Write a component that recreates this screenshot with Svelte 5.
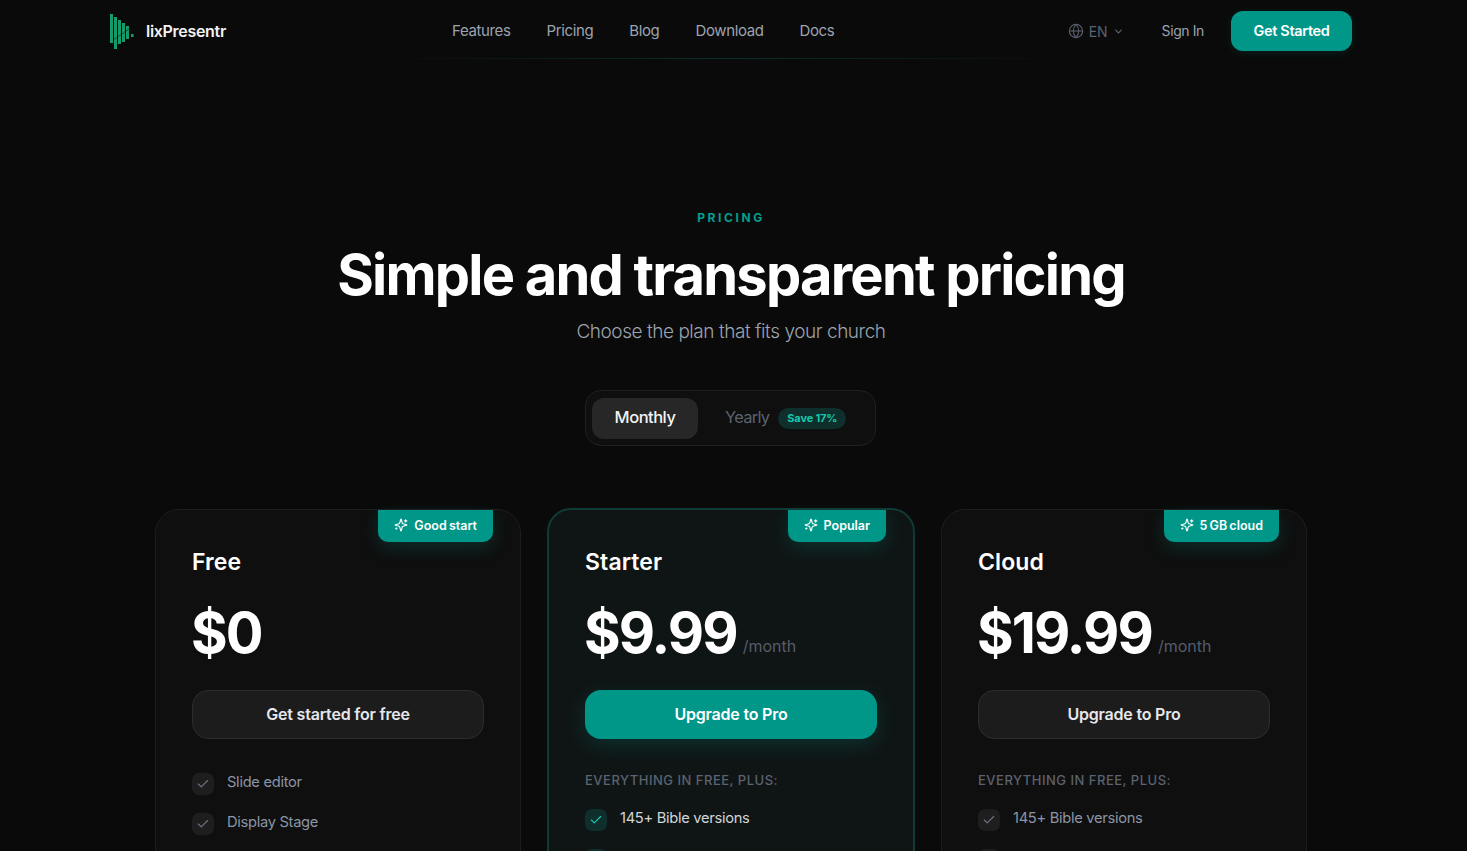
<script>
	const plans = [
		{
			name: "Free",
			badge: "Good start",
			price: "$0",
			cta: "Get started for free",
			features: ["Slide editor", "Display Stage"],
		},
		{
			name: "Starter",
			badge: "Popular",
			price: "$9.99",
			period: "/month",
			cta: "Upgrade to Pro",
			label: "Everything in Free, plus:",
			// second row is cut off by the bottom of the window, only its check shows
			features: ["145+ Bible versions", ""],
			featured: true,
		},
		{
			name: "Cloud",
			badge: "5 GB cloud",
			price: "$19.99",
			period: "/month",
			cta: "Upgrade to Pro",
			label: "Everything in Free, plus:",
			features: ["145+ Bible versions", ""],
		},
	];
	const links = ["Features", "Pricing", "Blog", "Download", "Docs"];
</script>

<div class="page">
	<header>
		<div class="bar">
			<a class="logo" href="#top">
				<svg width="24" height="36" viewBox="0 0 24 36" fill="#159a6c">
					<rect x="0" y="1" width="3" height="29" />
					<rect x="4" y="4" width="3" height="32" />
					<rect x="8" y="7" width="3" height="24" />
					<rect x="12" y="10" width="3" height="19" />
					<rect x="16" y="13" width="3" height="13" />
					<rect x="21" y="21" width="2.6" height="3" />
					<path d="M4 26.5 19 16" stroke="#0a0a0a" stroke-width="0.7" opacity="0.7" />
				</svg>
				<span>lixPresentr</span>
			</a>
			<nav>
				{#each links as link}
					<a href="#top">{link}</a>
				{/each}
			</nav>
			<div class="actions">
				<div class="lang">
					<svg width="16" height="16" viewBox="0 0 24 24" fill="none" stroke="currentColor" stroke-width="1.6">
						<circle cx="12" cy="12" r="10" />
						<path d="M12 2a14.5 14.5 0 0 0 0 20 14.5 14.5 0 0 0 0-20" />
						<path d="M2 12h20" />
					</svg>
					<span>EN</span>
					<svg width="11" height="11" viewBox="0 0 24 24" fill="none" stroke="currentColor" stroke-width="2.4">
						<path d="m5 8 7 7 7-7" />
					</svg>
				</div>
				<a class="signin" href="#top">Sign In</a>
				<button class="start">Get Started</button>
			</div>
		</div>
	</header>

	<main>
		<p class="eyebrow">PRICING</p>
		<h1>Simple and transparent pricing</h1>
		<p class="sub">Choose the plan that fits your church</p>

		<div class="toggle">
			<button class="opt active">Monthly</button>
			<div class="opt yearly">
				<span class="year">Yearly</span>
				<span class="save">Save 17%</span>
			</div>
		</div>

		<section class="cards">
			{#each plans as plan}
				<article class="card" class:featured={plan.featured}>
					<div class="badge">
						<svg width="14" height="14" viewBox="0 0 24 24" fill="none" stroke="currentColor" stroke-width="2" stroke-linecap="round" stroke-linejoin="round">
							<path d="M9.937 15.5A2 2 0 0 0 8.5 14.063l-6.135-1.582a.5.5 0 0 1 0-.962L8.5 9.936A2 2 0 0 0 9.937 8.5l1.582-6.135a.5.5 0 0 1 .963 0L14.063 8.5A2 2 0 0 0 15.5 9.937l6.135 1.581a.5.5 0 0 1 0 .964L15.5 14.063a2 2 0 0 0-1.437 1.437l-1.582 6.135a.5.5 0 0 1-.963 0z" />
							<path d="M20 3v4" />
							<path d="M22 5h-4" />
							<path d="M4 17v2" />
							<path d="M5 18H3" />
						</svg>
						<span>{plan.badge}</span>
					</div>
					<h2>{plan.name}</h2>
					<div class="price">
						<strong>{plan.price}</strong>
						{#if plan.period}<span>{plan.period}</span>{/if}
					</div>
					<button class="cta">{plan.cta}</button>
					{#if plan.label}
						<p class="label">{plan.label}</p>
					{/if}
					<ul class:tight={plan.label}>
						{#each plan.features as feature}
							<li>
								<span class="check">
									<svg width="14" height="14" viewBox="0 0 24 24" fill="none" stroke="currentColor" stroke-width="2" stroke-linecap="round" stroke-linejoin="round">
										<path d="M20 6 9 17l-5-5" />
									</svg>
								</span>
								{feature}
							</li>
						{/each}
					</ul>
				</article>
			{/each}
		</section>
	</main>
</div>

<style>
	:global(body) {
		background: #0a0a0a;
		overflow: hidden;
	}

	.page {
		width: 1462px;
		height: 851px;
		overflow: hidden;
		font-family: Inter, "Liberation Sans", sans-serif;
		color: #fff;
	}

	a {
		text-decoration: none;
		color: inherit;
	}

	button {
		font-family: inherit;
		border: 0;
		cursor: pointer;
	}

	header {
		height: 58px;
		position: relative;
	}

	header::after {
		content: "";
		position: absolute;
		left: 380px;
		width: 690px;
		bottom: -1px;
		height: 1px;
		background: linear-gradient(90deg, transparent, rgba(0, 150, 136, 0.28), transparent);
	}

	.bar {
		display: flex;
		align-items: center;
		height: 62px;
		padding: 0 110px;
	}

	.logo {
		display: flex;
		align-items: center;
		gap: 12px;
		font-size: 16px;
		font-weight: 600;
		letter-spacing: -0.3px;
		color: #f2f2f2;
	}

	nav {
		display: flex;
		gap: 36px;
		margin-left: 226px;
		padding-bottom: 2px;
		font-size: 15px;
		letter-spacing: -0.37px;
		color: #9ca3af;
	}

	.actions {
		display: flex;
		align-items: center;
		margin-left: auto;
	}

	.lang {
		display: flex;
		align-items: center;
		gap: 5px;
		font-size: 14px;
		color: #5b6270;
	}

	.signin {
		margin-left: 38px;
		padding-bottom: 2px;
		font-size: 14px;
		letter-spacing: -0.4px;
		color: #9ca3af;
	}

	.start {
		margin-left: 27px;
		width: 121px;
		height: 40px;
		padding: 0 0 2px;
		border-radius: 12px;
		background: #009688;
		color: #fff;
		font-size: 14.5px;
		font-weight: 600;
		letter-spacing: -0.35px;
		box-shadow: 0 2px 10px rgba(0, 150, 136, 0.15);
	}

	main {
		display: flex;
		flex-direction: column;
		align-items: center;
		padding-top: 152px;
	}

	.eyebrow {
		margin: 0;
		font-size: 12px;
		line-height: 15px;
		font-weight: 700;
		letter-spacing: 2.6px;
		color: #009f8f;
	}

	h1 {
		margin: 18px 0 0;
		font-size: 56px;
		line-height: 64px;
		font-weight: 700;
		letter-spacing: -1.78px;
		color: #fff;
	}

	.sub {
		margin: 11px 0 0;
		font-size: 19px;
		line-height: 28px;
		font-weight: 300;
		letter-spacing: -0.45px;
		color: #9ca3af;
	}

	.toggle {
		display: flex;
		align-items: center;
		box-sizing: border-box;
		width: 291px;
		height: 56px;
		margin: 44px 1px 0 0;
		padding: 0 6px;
		border: 1px solid #202020;
		border-radius: 16px;
		background: #0f0f0f;
	}

	.opt {
		font-size: 16.5px;
		letter-spacing: -0.5px;
	}

	.active {
		width: 106px;
		height: 41px;
		padding: 0 0 2px;
		border-radius: 12px;
		background: #272727;
		color: #f4f4f4;
		font-weight: 500;
	}

	.yearly {
		display: flex;
		align-items: center;
		gap: 9px;
		margin-left: 27px;
		letter-spacing: -0.75px;
		color: #5b6270;
	}

	.year {
		padding-bottom: 2px;
	}

	.save {
		padding: 0 9px;
		line-height: 21px;
		border-radius: 11px;
		background: #0f2f2c;
		color: #14c8ac;
		font-size: 11px;
		font-weight: 700;
		letter-spacing: -0.15px;
	}

	.cards {
		display: grid;
		grid-template-columns: 366px 368px 366px;
		gap: 26px;
		align-items: start;
		margin-top: 63px;
	}

	.card {
		position: relative;
		height: 420px;
		padding: 0 36px;
		border: 1px solid #1d1d1d;
		border-radius: 24px;
		background: #0f0f0f;
	}

	.featured {
		margin-top: -1px;
		border: 2px solid #103a35;
		background: #0f1515;
	}

	.badge {
		position: absolute;
		top: 0;
		right: 27px;
		display: flex;
		align-items: center;
		gap: 6px;
		box-sizing: border-box;
		height: 32px;
		padding: 0 16px 2px;
		border-radius: 0 0 10px 10px;
		background: #009688;
		font-size: 12.5px;
		font-weight: 600;
		word-spacing: -1px;
		box-shadow: 0 6px 18px rgba(0, 150, 136, 0.22);
	}

	h2 {
		margin: 37px 0 0;
		font-size: 23px;
		line-height: 30px;
		font-weight: 600;
		letter-spacing: 0.1px;
	}

	.price {
		display: flex;
		align-items: flex-end;
		gap: 6px;
		margin: 22px 0 0 -1px;
	}

	.price strong {
		font-size: 56px;
		line-height: 68px;
		font-weight: 700;
		letter-spacing: -1.9px;
	}

	.price span {
		margin-bottom: 11.5px;
		font-size: 16px;
		line-height: 20px;
		color: #555c6b;
	}

	.cta {
		display: block;
		box-sizing: border-box;
		width: 292px;
		height: 49px;
		margin-top: 23px;
		padding: 0 0 2px;
		border: 1px solid #2c2c2c;
		border-radius: 16px;
		background: #1c1c1c;
		color: #e5e7eb;
		font-size: 16px;
		font-weight: 600;
		letter-spacing: -0.2px;
	}

	.featured .cta {
		border: 0;
		background: #009688;
		color: #fff;
		box-shadow: 0 6px 20px rgba(0, 150, 136, 0.22);
	}

	.label {
		margin: 32px 0 0;
		font-size: 13px;
		line-height: 18px;
		font-weight: 500;
		letter-spacing: 0.5px;
		text-transform: uppercase;
		color: #5b6270;
	}

	ul {
		list-style: none;
		margin: 33px 0 0;
		padding: 0;
		display: flex;
		flex-direction: column;
		gap: 17px;
	}

	ul.tight {
		margin-top: 19px;
	}

	li {
		display: flex;
		align-items: flex-start;
		gap: 13px;
		font-size: 14.7px;
		line-height: 20px;
		letter-spacing: -0.3px;
		color: #8b95a5;
	}

	.featured li {
		color: #d1d5db;
	}

	.check {
		display: flex;
		align-items: center;
		justify-content: center;
		flex: none;
		width: 22px;
		height: 22px;
		margin-top: 1px;
		border-radius: 7px;
		background: #1e1e1e;
		color: #6b7280;
	}

	.featured .check {
		background: #0f2f2c;
		color: #14c8ac;
	}
</style>
